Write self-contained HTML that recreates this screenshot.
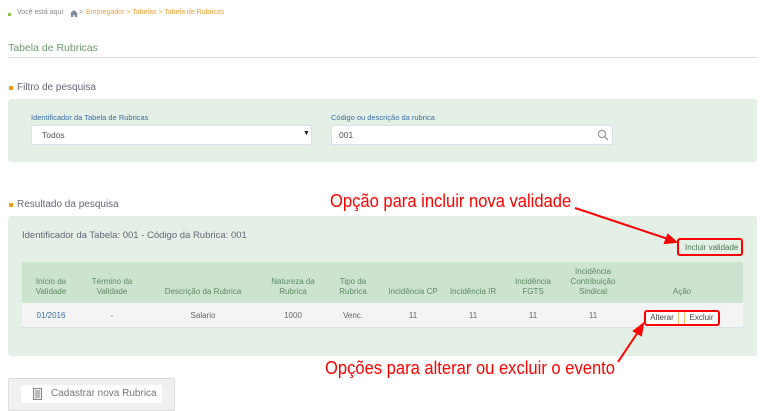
<!DOCTYPE html>
<html><head><meta charset="utf-8"><style>
*{margin:0;padding:0;box-sizing:border-box}
body{width:768px;height:411px;overflow:hidden;background:#fff;font-family:"Liberation Sans",sans-serif;position:relative;color:#555}
.a{position:absolute;white-space:nowrap}
.panel{position:absolute;left:8px;width:749px;background:#e4efe5;border-radius:3px}
.sq{position:absolute;width:4px;height:4px;background:#f39c12}
.th{position:absolute;font-size:8px;color:#5e8a63;text-align:center;line-height:10px;transform:translateX(-50%)}
.td{position:absolute;top:311px;font-size:8px;color:#666;transform:translateX(-50%)}
.red{color:#f00;font-size:18px;transform:scaleX(0.92);transform-origin:0 0}
</style></head><body>
<div class="a" style="left:8px;top:13px;width:3px;height:3px;background:#8bc34a"></div>
<div class="a" style="left:17px;top:9px;font-size:7px;color:#888">Você está aqui:</div>
<svg class="a" style="left:70px;top:10px" width="8" height="7" viewBox="0 0 8 7"><path d="M4 0L0 3.5h1V7h2.2V5h1.6v2H7V3.5h1z" fill="#7a8aa0"/></svg>
<div class="a" style="left:79px;top:9px;font-size:7px;color:#888">&gt;</div>
<div class="a" style="left:86px;top:9px;font-size:7px;color:#f0a030">Empregador &gt; Tabelas &gt; Tabela de Rubricas</div>
<div class="a" style="left:8px;top:42px;font-size:10.5px;color:#6a9a70">Tabela de Rubricas</div>
<div class="a" style="left:8px;top:57px;width:749px;height:1px;background:#d5dde8"></div>
<div class="sq" style="left:9px;top:86px"></div>
<div class="a" style="left:17px;top:82px;font-size:10px;color:#667">Filtro de pesquisa</div>
<div class="panel" style="top:99px;height:63px"></div>
<div class="a" style="left:31px;top:113px;font-size:7.5px;color:#3a6ea5">Identificador da Tabela de Rubricas</div>
<div class="a" style="left:31px;top:125px;width:281px;height:20px;background:#fff;border:1px solid #dde;border-radius:2px"></div>
<div class="a" style="left:42px;top:130px;font-size:8.5px;color:#555">Todos</div>
<div class="a" style="left:303px;top:130px;font-size:7px;color:#222">▼</div>
<div class="a" style="left:331px;top:113px;font-size:7.5px;color:#3a6ea5">Código ou descrição da rubrica</div>
<div class="a" style="left:331px;top:125px;width:282px;height:20px;background:#fff;border:1px solid #dde;border-radius:2px"></div>
<div class="a" style="left:339px;top:130px;font-size:8.5px;color:#555">001</div>
<svg class="a" style="left:597px;top:129px" width="12" height="12" viewBox="0 0 12 12"><circle cx="5" cy="5" r="3.6" fill="none" stroke="#999" stroke-width="1.2"/><path d="M7.6 7.6L11 11" stroke="#999" stroke-width="1.4"/></svg>
<div class="sq" style="left:9px;top:203px"></div>
<div class="a" style="left:17px;top:199px;font-size:10px;color:#667">Resultado da pesquisa</div>
<div class="a red" style="left:330px;top:191px">Opção para incluir nova validade</div>
<div class="panel" style="top:216px;height:140px"></div>
<div class="a" style="left:22px;top:230px;font-size:9.5px;color:#667">Identificador da Tabela: 001 - Código da Rubrica: 001</div>
<div class="a" style="left:677px;top:238px;width:66px;height:18px;border:2px solid #f00;border-radius:3px"></div>
<div class="a" style="left:685px;top:243px;font-size:8px;color:#4a7a50">Incluir validade</div>
<div class="a" style="left:22px;top:262px;width:721px;height:41px;background:#cbe3cf"></div>
<div class="a" style="left:22px;top:303px;width:721px;height:25px;background:#f4f4f4;border-bottom:1px solid #d8e0e8"></div>
<div class="th" style="left:51px;top:277px">Início da<br>Validade</div>
<div class="th" style="left:112px;top:277px">Término da<br>Validade</div>
<div class="th" style="left:203px;top:287px">Descrição da Rubrica</div>
<div class="th" style="left:293px;top:277px">Natureza da<br>Rubrica</div>
<div class="th" style="left:353px;top:277px">Tipo da<br>Rubrica</div>
<div class="th" style="left:413px;top:287px">Incidência CP</div>
<div class="th" style="left:473px;top:287px">Incidência IR</div>
<div class="th" style="left:533px;top:277px">Incidência<br>FGTS</div>
<div class="th" style="left:593px;top:267px">Incidência<br>Contribuição<br>Sindical</div>
<div class="th" style="left:682px;top:287px">Ação</div>
<div class="td" style="left:51px;color:#3a6ea5">01/2016</div>
<div class="td" style="left:112px">-</div>
<div class="td" style="left:203px">Salario</div>
<div class="td" style="left:293px">1000</div>
<div class="td" style="left:353px">Venc.</div>
<div class="td" style="left:413px">11</div>
<div class="td" style="left:473px">11</div>
<div class="td" style="left:533px">11</div>
<div class="td" style="left:593px">11</div>
<div class="a" style="left:644px;top:310px;width:76px;height:16px;border:2px solid #f00;border-radius:3px;background:#fff"></div>
<div class="a" style="left:646px;top:312px;width:33px;height:12px;border-right:1px solid #f0c070;font-size:8px;color:#444;text-align:center;line-height:12px">Alterar</div>
<div class="a" style="left:684px;top:312px;width:34px;height:12px;border-left:1px solid #f0c070;font-size:8px;color:#444;text-align:center;line-height:12px">Excluir</div>
<div class="a red" style="left:325px;top:358px">Opções para alterar ou excluir o evento</div>
<svg class="a" style="left:0;top:0" width="768" height="411"><g stroke="#f00" stroke-width="2" fill="#f00"><line x1="575" y1="208" x2="668" y2="239"/><path d="M676 242l-11 1 3-8z"/><line x1="618" y1="362" x2="638" y2="332"/><path d="M643 324l-2 11-7-4z"/></g></svg>
<div class="a" style="left:8px;top:378px;width:167px;height:33px;background:#f0f0f0;border:1px solid #ddd;border-radius:2px"></div>
<div class="a" style="left:21px;top:385px;width:141px;height:18px;background:#fff"></div>
<svg class="a" style="left:33px;top:388px" width="9" height="12" viewBox="0 0 9 12"><rect x=".5" y=".5" width="8" height="11" fill="#eee" stroke="#888"/><path d="M2 3h5M2 5h5M2 7h5M2 9h5" stroke="#888"/></svg>
<div class="a" style="left:51px;top:388px;font-size:10px;color:#777">Cadastrar nova Rubrica</div>
</body></html>
